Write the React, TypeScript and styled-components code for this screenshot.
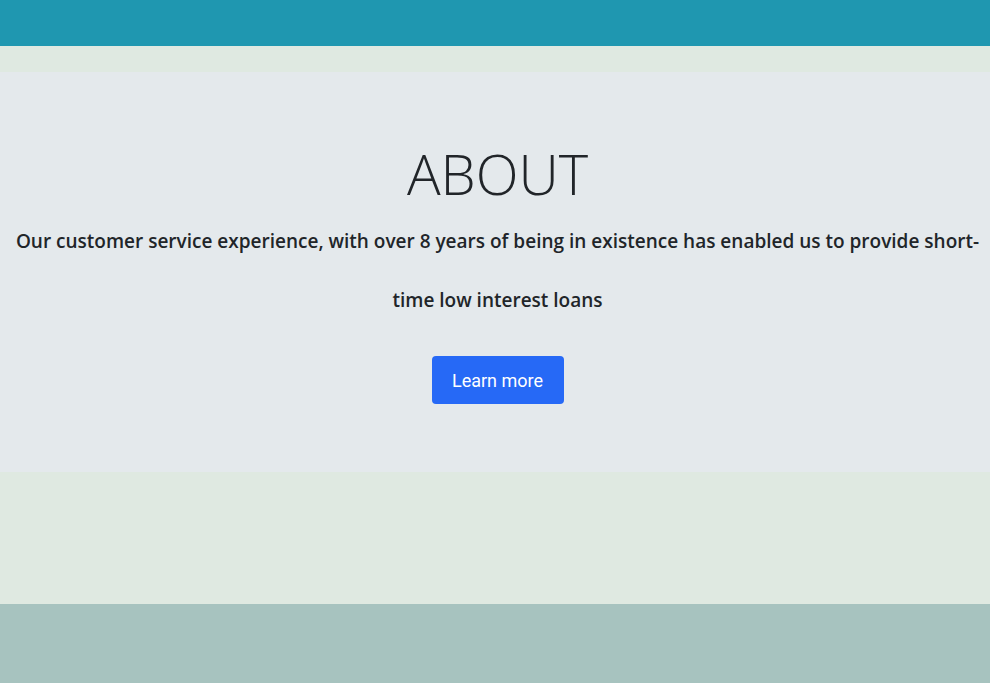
import React from 'react'
import styled, {createGlobalStyle} from 'styled-components'

const GlobalStyle = createGlobalStyle`
  html, body {
    margin: 0;
    padding: 0;
    background: #dfe9e1;
  }
`

const TopBar = styled.header`
  height: 46px;
  background-color: #1f97b0;
`

const Page = styled.main`
  padding-top: 26px;
  background-color: #dfe9e1;
`

const AboutSection = styled.section`
  display: flex;
  flex-direction: column;
  align-items: center;
  height: 400px;
  box-sizing: border-box;
  padding: 62px 0 0 5px;
  background-color: #e4e9ec;
  text-align: center;
  color: #212529;
`

const Title = styled.h1`
  margin: 0;
  font-family: "Open Sans", sans-serif;
  font-weight: 300;
  font-size: 56px;
  line-height: 78px;
`

const Text = styled.p`
  margin: 0;
  font-family: "Open Sans", sans-serif;
  font-weight: 600;
  font-size: 19px;
  line-height: 59px;
`

const Button = styled.button`
  margin-top: 26px;
  width: 132px;
  height: 48px;
  border: none;
  border-radius: 4px;
  background-color: #2669f6;
  color: #fff;
  font-family: Roboto, "Liberation Sans", sans-serif;
  font-size: 18px;
  cursor: pointer;
`

const Spacer = styled.div`
  height: 132px;
  background-color: #dfe9e1;
`

const Footer = styled.footer`
  height: 79px;
  background-color: #a7c3bf;
`

function App() {
    return (
        <>
            <GlobalStyle/>
            <TopBar/>
            <Page>
                <AboutSection>
                    <Title>ABOUT</Title>
                    <Text>
                        Our customer service experience, with over 8 years of being in existence has enabled us to
                        provide short-time low interest loans
                    </Text>
                    <Button>Learn more</Button>
                </AboutSection>
                <Spacer/>
                <Footer/>
            </Page>
        </>
    )
}

export default App
